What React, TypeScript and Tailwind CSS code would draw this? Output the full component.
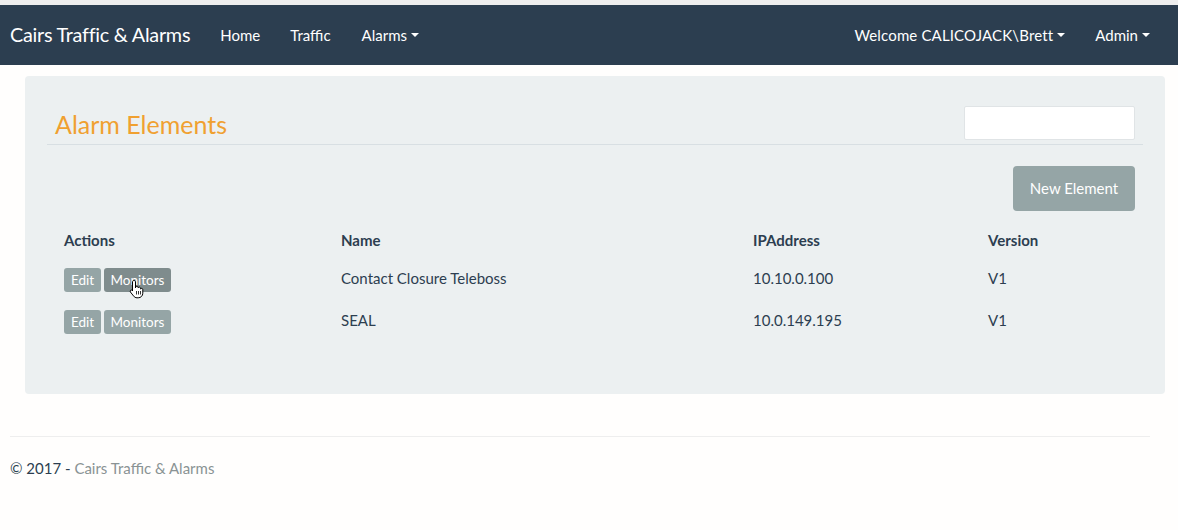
import React from "react";

const Caret = () => (
  <span className="ml-1 inline-block w-0 h-0 border-l-[4px] border-r-[4px] border-t-[4px] border-l-transparent border-r-transparent border-t-white align-middle" />
);

const rows = [
  { name: "Contact Closure Teleboss", ip: "10.10.0.100", ver: "V1", hover: true },
  { name: "SEAL", ip: "10.0.149.195", ver: "V1", hover: false },
];

export default function App() {
  return (
    <div className="min-h-[530px] bg-[#fffefd] text-[#2c3e50] text-[15px]" style={{ fontFamily: "Lato, 'Open Sans', sans-serif" }}>
      <div className="h-[5px] bg-[#eeeeee]" />
      <nav className="h-[60px] bg-[#2c3e50] flex items-center text-white">
        <span className="ml-[10px] text-[19.8px] tracking-[-0.25px]">Cairs Traffic &amp; Alarms</span>
        <span className="ml-[30px]">Home</span>
        <span className="ml-[30px]">Traffic</span>
        <span className="ml-[31px] flex items-center">Alarms<Caret /></span>
        <span className="ml-auto flex items-center tracking-[0.15px]">Welcome CALICOJACK\Brett<Caret /></span>
        <span className="ml-[30px] mr-[28px] flex items-center">Admin<Caret /></span>
      </nav>
      <div className="px-[25px] pt-[11px] pr-[13px]">
        <div className="bg-[#ecf0f1] rounded-[4px] h-[318px] pt-[30px] px-[22px]">
          <div className="flex items-end justify-between pb-[6px] border-b border-[#d8dfe3]">
            <h1 className="text-[#f0a030] text-[25px] leading-[28px] ml-[8px]">Alarm Elements</h1>
            <div className="w-[171px] h-[34px] bg-white border border-[#e0e4e6] rounded-[2px] mr-[8px] mb-[-2px]" />
          </div>
          <div className="flex justify-end mt-[21px] mr-[8px]">
            <button className="w-[122px] h-[45px] bg-[#95a5a6] text-white rounded-[4px] text-[15px]">New Element</button>
          </div>
          <div className="ml-[9px] mt-[16px]">
            <div className="flex h-[26px] items-center font-bold mt-[1px]">
              <div className="w-[285px] pl-[8px]">Actions</div>
              <div className="w-[412px]">Name</div>
              <div className="w-[235px]">IPAddress</div>
              <div>Version</div>
            </div>
            {rows.map((r, i) => (
              <div key={i} className={`flex items-center ${i === 0 ? "mt-[13px]" : "mt-[18px]"}`}>
                <div className="w-[285px] pl-[8px] flex gap-[3px] relative pt-[2px] mb-[-2px]">
                  <span className="h-[24px] w-[37px] bg-[#95a5a6] text-white text-[13.5px] rounded-[3px] flex items-center justify-center">Edit</span>
                  <span className={`h-[24px] w-[67px] ${r.hover ? "bg-[#7f8c8d]" : "bg-[#95a5a6]"} text-white text-[13.5px] rounded-[3px] flex items-center justify-center`}>Monitors</span>
                  {r.hover && (
                    <svg className="absolute left-[73px] top-[13px]" width="16" height="20" viewBox="0 0 16 20">
                      <path d="M5 1.5c.8 0 1.5.6 1.5 1.4V9l.1-.9c.2-.7.9-1 1.5-.9.6.1 1 .6 1 1.2v.5c.2-.6.8-.9 1.4-.8.6.1 1 .6 1 1.2v.7c.3-.5.8-.7 1.3-.6.6.1 1 .6 1 1.2v3.6c0 2.6-2 4.6-4.6 4.6H8c-1.4 0-2.6-.7-3.4-1.8L1.4 13c-.4-.6-.3-1.3.2-1.7.5-.4 1.3-.3 1.7.2L3.5 12V2.9C3.5 2.1 4.2 1.5 5 1.5z" fill="white" stroke="black" strokeWidth="1" />
                      <path d="M7.5 12v3.5M9.5 12v3.5M11.5 12v3.5" stroke="black" strokeWidth="0.8" />
                    </svg>
                  )}
                </div>
                <div className="w-[412px]">{r.name}</div>
                <div className="w-[235px]">{r.ip}</div>
                <div>{r.ver}</div>
              </div>
            ))}
          </div>
        </div>
      </div>
      <div className="mx-[10px] w-[1140px] mt-[42px] border-t border-[#eeeeee]" />
      <div className="ml-[10px] mt-[20px] text-[15px]">
        © 2017 - <span className="text-[#8a9394]">Cairs Traffic &amp; Alarms</span>
      </div>
    </div>
  );
}
